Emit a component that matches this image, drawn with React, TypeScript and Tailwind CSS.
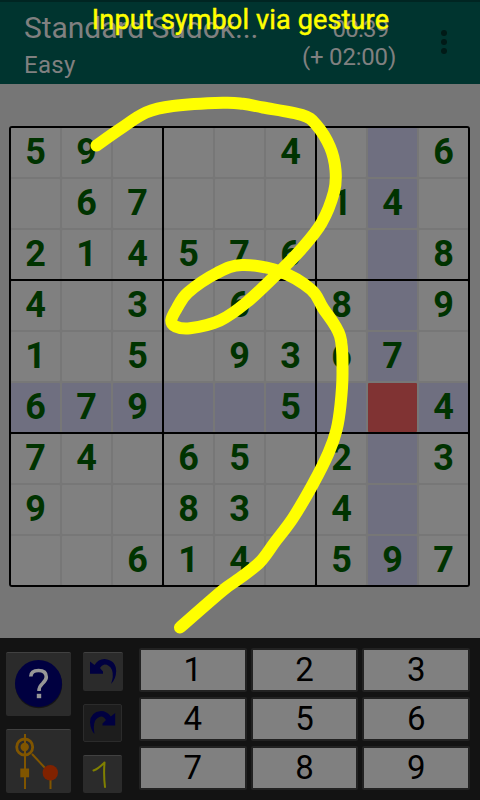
import React from "react";

const puzzle = [
  "59...4..6",
  ".67...14.",
  "214576..8",
  "4.3.6.8.9",
  "1.5.9367.",
  "679..5..4",
  "74.65.2.3",
  "9..83.4..",
  "..614.597",
];
const selected = { row: 5, col: 7 };

const gesture: [number, number][] = [
  [96.5, 145.5], [120, 129], [146, 112.5], [173, 106], [223, 102.8], [243, 103.8], [263, 107.5], [302, 115], [316, 124.5],
  [330, 147], [335.5, 170], [334, 192], [321.5, 223], [301, 249.5], [281, 270], [247, 302], [220, 320.5],
  [190, 328.3], [175.5, 326.5], [171.3, 320], [177, 308], [188, 292.5], [217, 273], [242, 265], [280, 271.5], [311, 289.5],
  [323, 308], [340, 336], [342.5, 373], [340.5, 405], [336.5, 430], [328.5, 453], [313, 484], [293, 518], [275, 542], [260, 562],
  [240, 578], [222, 591], [180, 627.5],
];

function smooth(p: [number, number][]) {
  let d = `M${p[0][0]} ${p[0][1]}`;
  for (let i = 0; i < p.length - 1; i++) {
    const a = p[Math.max(0, i - 1)], b = p[i], c = p[i + 1], e = p[Math.min(p.length - 1, i + 2)];
    d += `C${b[0] + (c[0] - a[0]) / 6} ${b[1] + (c[1] - a[1]) / 6} ${c[0] - (e[0] - b[0]) / 6} ${c[1] - (e[1] - b[1]) / 6} ${c[0]} ${c[1]}`;
  }
  return d;
}

function Header() {
  return (
    <header className="flex h-[84px] border-t-2 border-[#002522] bg-[#00342f] text-[#808080]">
      <div className="w-[240px] pl-6 pt-[8px] whitespace-nowrap">
        <div className="text-[30px] leading-[36px] tracking-[-0.05px]">Standard Sudok...</div>
        <div className="pt-[4px] text-[24px] leading-[30px] tracking-[0.3px]">Easy</div>
      </div>
      <div className="w-[218px] pt-[13px] text-center text-[24px] leading-[28px] tracking-[-0.2px]">
        <div className="pl-[23px] tracking-[-0.8px]">00:39</div>
        <div>(+ 02:00)</div>
      </div>
      <div className="-ml-[17px] flex flex-col gap-[3px] pt-[28px]">
        {[0, 1, 2].map((i) => (
          <span key={i} className="size-[6px] rounded-full bg-[#001a17]" />
        ))}
      </div>
    </header>
  );
}

function Board() {
  return (
    <div className="ml-[9px] mt-[42px] grid w-[461px] grid-cols-3 gap-[2px] rounded-[3px] bg-black p-[2px]">
      {Array.from({ length: 9 }, (_, b) => (
        <div key={b} className="grid grid-cols-3 gap-[2px] rounded-[1px] bg-[#777777]">
          {Array.from({ length: 9 }, (_, i) => {
            const r = Math.floor(b / 3) * 3 + Math.floor(i / 3);
            const c = (b % 3) * 3 + (i % 3);
            const isSel = r === selected.row && c === selected.col;
            const isLine = r === selected.row || c === selected.col;
            const bg = isSel ? "bg-[#803333]" : isLine ? "bg-[#6f6f80]" : "bg-[#808080]";
            return (
              <div key={i} className={`h-[49px] rounded-[1px] text-center text-[36px] leading-[49px] font-bold text-[#003300] ${bg}`}>
                {puzzle[r][c] === "." ? "" : puzzle[r][c]}
              </div>
            );
          })}
        </div>
      ))}
    </div>
  );
}

const tile = "flex items-center justify-center rounded-[2px] border-t border-[#414141] bg-[#2b2b2b]";

function Tools() {
  return (
    <div className="flex gap-3 pl-[6px] pt-[14px]">
      <div className="flex flex-col gap-[13px]">
        <div className={`h-[64px] w-[65px] ${tile}`}>
          <svg width="65" height="63" viewBox="6 653 65 63">
            <circle cx="38.7" cy="684.8" r="23.5" fill="#000" opacity=".5" />
            <circle cx="38.5" cy="683.5" r="23.5" fill="#000040" />
            <path d="M30.8 676.5Q31 670.5 38.5 670.5Q46.3 670.5 46.3 677Q46.3 680 42.5 683.5Q39 686.5 39 691" fill="none" stroke="#969696" strokeWidth="3.6" />
            <rect x="36.8" y="693.8" width="4.4" height="4.4" fill="#969696" />
          </svg>
        </div>
        <div className={`h-[64px] w-[65px] ${tile}`}>
          <svg width="65" height="63" viewBox="6 730 65 63" fill="none" stroke="#805500" strokeWidth="2">
            <path d="M25 734V789M32 754L46 769" />
            <path d="M50.5 778V789" />
            <circle cx="24.7" cy="747" r="8" strokeWidth="2.8" />
            <circle cx="24.7" cy="747" r="4.2" fill="#805500" stroke="none" />
            <rect x="20.3" y="768.5" width="8.8" height="8.8" fill="#805500" stroke="none" />
            <circle cx="50.3" cy="772.7" r="7.7" fill="#802200" stroke="none" />
          </svg>
        </div>
      </div>
      <div className="flex flex-col gap-[13px]">
        <div className={`h-[39px] w-[40px] ${tile}`}>
          <svg width="40" height="38" viewBox="83 653 40 38">
            <path d="M90 661.5L94.5 665Q98 659 104.5 659Q116 660 116.2 671Q116 679 111 684Q114 676 112 670Q109.5 664.5 104.5 664.5Q101.5 665 100 668L103 671.5V673.7H90Z" fill="#000040" />
          </svg>
        </div>
        <div className="h-[38px] w-[39px] rounded-[2px] border border-[#2b2b2b] bg-[#1d1d1d]">
          <svg width="37" height="36" viewBox="84 705 37 36">
            <path d="M115.2 713L110.8 716.5Q107 711 101 711Q90.5 712 90 722Q90.5 730 94.5 734Q93 726 95 721Q97.5 716.5 102 716.5Q104.500 717 106 720L102.5 723.500V725.5H115.2Z" fill="#000040" />
          </svg>
        </div>
        <div className={`h-[38px] w-[39px] ${tile}`}>
          <svg width="39" height="37" viewBox="83 756 39 37" fill="none" stroke="#808000" strokeWidth="2" strokeLinecap="round" strokeLinejoin="round">
            <path d="M93.5 770.5Q98 769 104.5 762.5Q103.5 775 105 787" />
          </svg>
        </div>
      </div>
    </div>
  );
}

export default function App() {
  return (
    <div className="relative flex h-[800px] w-[480px] flex-col overflow-hidden bg-[#767676] font-[Roboto,sans-serif]">
      <Header />
      <Board />
      <div className="mt-auto flex h-[162px] bg-[#131313]">
        <Tools />
        <div className="ml-auto mr-[10px] mt-[10px] grid h-[142px] w-[331px] grid-cols-3 grid-rows-3 gap-x-[4px] gap-y-[5px]">
          {[1, 2, 3, 4, 5, 6, 7, 8, 9].map((n) => (
            <button key={n} className="rounded-[2px] border-2 border-[#222222] bg-[#808080] bg-clip-padding text-[33px] leading-[38px] text-black">
              {n}
            </button>
          ))}
        </div>
      </div>
      <svg className="absolute inset-0" width="480" height="800" fill="none">
        <path d={smooth(gesture)} stroke="#ffff00" strokeWidth="12" strokeLinecap="round" strokeLinejoin="round" />
      </svg>
      <div className="absolute left-0 top-[4px] w-full pl-px text-center text-[27px] leading-[32px] tracking-[0.16px] text-[#ffff00] [-webkit-text-stroke:0.5px_#ffff00]">Input symbol via gesture</div>
    </div>
  );
}
